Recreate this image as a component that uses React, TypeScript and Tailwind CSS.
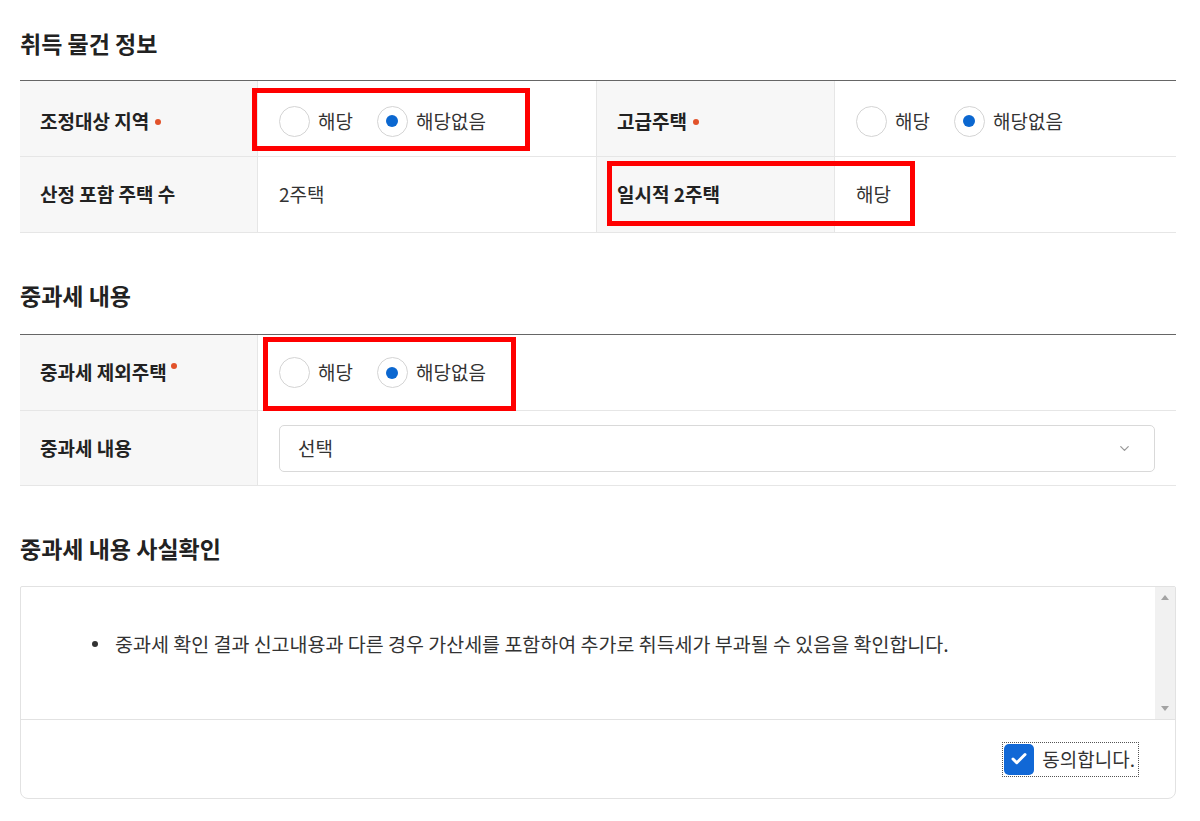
import { ChevronDown, Check } from "lucide-react";

const font = { fontFamily: '"Noto Sans CJK KR", "Noto Sans", sans-serif' };

const Req = () => (
  <span className="inline-block w-[6px] h-[6px] rounded-full bg-[#e2522a] ml-[6px] align-middle relative top-[1px]" />
);

interface RadioProps {
  label: string;
  checked?: boolean;
}

const Radio = ({ label, checked }: RadioProps) => (
  <label className="flex items-center gap-[8px]">
    <span className="flex items-center justify-center w-[31px] h-[31px] rounded-full border border-[#d4d4d4] bg-white">
      {checked && <span className="w-[12px] h-[12px] rounded-full bg-[#0b67d0]" />}
    </span>
    <span className="text-[19px] text-[#333]">{label}</span>
  </label>
);

const RadioGroup = () => (
  <div className="flex items-center gap-[24px]">
    <Radio label="해당" />
    <Radio label="해당없음" checked />
  </div>
);

// red annotation box drawn over the screenshot
const Mark = ({ className }: { className: string }) => (
  <div className={`absolute z-10 border-[5px] border-[#ff0000] pointer-events-none ${className}`} />
);

const LabelCell = ({
  children,
  last,
  className = "",
}: {
  children: React.ReactNode;
  last?: boolean;
  className?: string;
}) => (
  <div
    className={`relative flex items-center pl-[20px] bg-[#f7f7f7] border-r border-[#e6e6e6] text-[19px] font-bold text-[#222] ${
      last ? "" : "border-b"
    } ${className}`}
  >
    {children}
  </div>
);

const ValueCell = ({
  children,
  last,
  className = "",
}: {
  children?: React.ReactNode;
  last?: boolean;
  className?: string;
}) => (
  <div
    className={`relative flex items-center px-[21px] bg-white border-[#e6e6e6] text-[19px] text-[#333] ${
      last ? "" : "border-b"
    } ${className}`}
  >
    {children}
  </div>
);

const Title = ({ children, className = "mb-[20px]" }: { children: React.ReactNode; className?: string }) => (
  <h2 className={`h-[32px] leading-[32px] text-[23px] font-bold text-[#222] ${className}`}>{children}</h2>
);

export default function App() {
  return (
    <div className="w-[1200px] min-h-[821px] bg-white pt-[27px] px-[20px] pr-[24px]" style={font}>
      <Title className="mb-[21px]">취득 물건 정보</Title>
      <div className="grid grid-cols-[238px_339px_238px_1fr] grid-rows-[76px_75px] border-t border-[#666] border-b border-b-[#e6e6e6]">
        <LabelCell className="pt-[5px]">
          조정대상 지역
          <Req />
        </LabelCell>
        <ValueCell className="border-r pt-[5px]">
          <RadioGroup />
          <Mark className="left-[-6px] top-[7px] w-[278px] h-[63px]" />
        </ValueCell>
        <LabelCell className="pt-[5px]">
          고급주택
          <Req />
        </LabelCell>
        <ValueCell className="pt-[5px]">
          <RadioGroup />
        </ValueCell>

        <LabelCell last>산정 포함 주택 수</LabelCell>
        <ValueCell last className="border-r">
          2주택
        </ValueCell>
        <LabelCell last>
          일시적 2주택
          <Mark className="left-[10px] top-[4px] w-[308px] h-[65px]" />
        </LabelCell>
        <ValueCell last>해당</ValueCell>
      </div>

      <div className="h-[46px]" />
      <Title className="mb-[23px]">중과세 내용</Title>
      <div className="grid grid-cols-[238px_1fr] grid-rows-[76px_74px] border-t border-[#666] border-b border-b-[#e6e6e6]">
        <LabelCell>
          중과세 제외주택
          <span className="inline-block w-[6px] h-[6px] rounded-full bg-[#e2522a] ml-[4px] relative top-[-7px]" />
        </LabelCell>
        <ValueCell>
          <RadioGroup />
          <Mark className="left-[5px] top-[2px] w-[253px] h-[74px]" />
        </ValueCell>
        <LabelCell last>중과세 내용</LabelCell>
        <ValueCell last>
          <div className="flex items-center justify-between w-full h-[47px] border border-[#d9d9d9] rounded-[5px] pl-[18px] pr-[22px]">
            <span>선택</span>
            <ChevronDown size={15} strokeWidth={2} className="text-[#999]" />
          </div>
        </ValueCell>
      </div>

      <div className="h-[46px]" />
      <Title className="mb-[22px]">중과세 내용 사실확인</Title>
      <div className="border border-[#e2e2e2] rounded-b-[8px] rounded-t-[2px] overflow-hidden">
        <div className="flex h-[133px] border-b border-[#e2e2e2]">
          <div className="flex-1 pt-[43px] pl-[71px]">
            <div className="flex items-center gap-[17px] text-[19.5px] text-[#333] leading-[28px]">
              <span className="w-[6px] h-[6px] rounded-full bg-[#333] shrink-0" />
              <span>중과세 확인 결과 신고내용과 다른 경우 가산세를 포함하여 추가로 취득세가 부과될 수 있음을 확인합니다.</span>
            </div>
          </div>
          <div className="w-[20px] bg-[#f1f1f1] flex flex-col items-center justify-between py-[8px]">
            <span className="w-0 h-0 border-x-[4px] border-x-transparent border-b-[5px] border-b-[#a3a3a3]" />
            <span className="w-0 h-0 border-x-[4px] border-x-transparent border-t-[5px] border-t-[#a3a3a3]" />
          </div>
        </div>
        <div className="flex items-center justify-end h-[78px] pr-[38px]">
          <label className="flex items-center gap-[8px] outline-1 outline-dotted outline-[#555] outline-offset-[1px] pr-[2px]">
            <span className="flex items-center justify-center w-[30px] h-[31px] rounded-[5px] bg-[#1168d6]">
              <Check size={18} strokeWidth={4} className="text-white" />
            </span>
            <span className="text-[19px] text-[#333]">동의합니다.</span>
          </label>
        </div>
      </div>
    </div>
  );
}
